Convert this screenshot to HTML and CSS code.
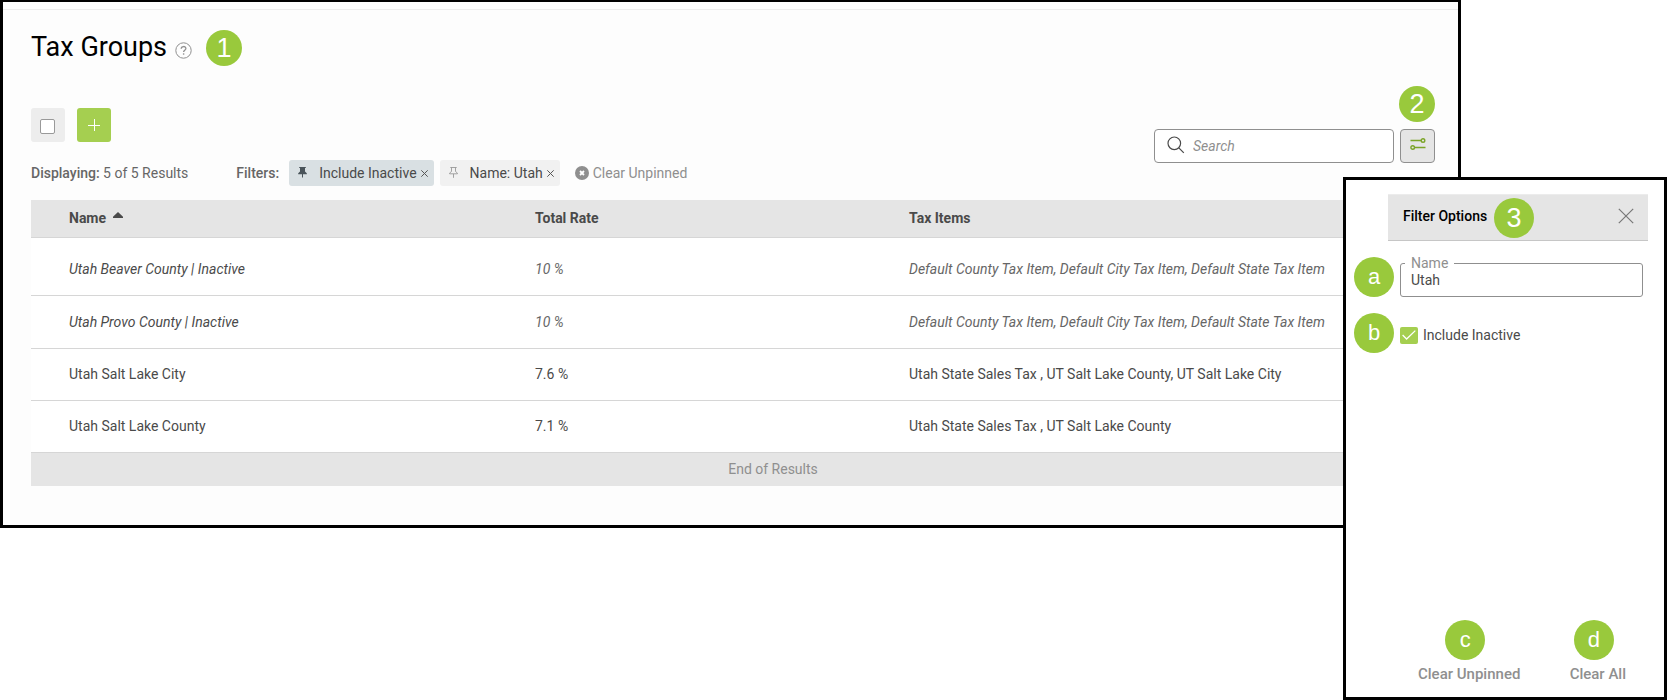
FILE: index.html
```html
<!DOCTYPE html>
<html lang="en">
<head>
  <meta charset="UTF-8" />
  <meta name="viewport" content="width=device-width, initial-scale=1.0"/>
  <title>Tax Groups</title>
  <link rel="stylesheet" href="styles.css">
</head>
<body>
  <main class="frame">
    <header class="page-header">
      <h1>Tax Groups</h1>
      <button class="help" aria-label="Help">
        <svg width="17" height="17" viewBox="0 0 17 17" fill="none" stroke="#8f8f8f">
          <circle cx="8.5" cy="8.5" r="7.7" />
          <path d="M6.2 6.8c0-3 4.7-3 4.7-.2 0 1.6-2.3 1.7-2.3 3.4" stroke-width="1.3" />
          <path d="M8.6 11.3v1.4" stroke-width="1.4" />
        </svg>
      </button>
      <span class="badge">1</span>
    </header>

    <div class="toolbar">
      <div class="actions">
        <label class="tile"><input type="checkbox" class="check" aria-label="Select all"></label>
        <button class="add" aria-label="Add">
          <svg width="12" height="12" viewBox="0 0 12 12" stroke="#fff" stroke-width="1"><path d="M0 6.5h12M6.5 0v12" /></svg>
        </button>
      </div>
      <div class="search-group">
        <label class="search">
          <svg width="18" height="18" viewBox="0 0 18 18" fill="none" stroke="#4a4a4a" stroke-width="1.2">
            <circle cx="7.3" cy="7.3" r="6.3" />
            <path d="M11.8 11.8l5 5" />
          </svg>
          <input type="text" placeholder="Search" aria-label="Search">
        </label>
        <button class="filter-btn" aria-label="Filter options">
          <svg width="16" height="12" viewBox="0 0 16 12" fill="none" stroke="#7ba428" stroke-width="1.4">
            <path d="M.5 2.5h10.5M5 9.5h10.5" />
            <circle cx="13" cy="2.5" r="1.8" />
            <circle cx="2.7" cy="9.5" r="1.8" />
          </svg>
        </button>
        <span class="badge badge-over">2</span>
      </div>
    </div>

    <div class="filters">
      <p class="displaying"><b>Displaying:</b> 5 of 5 Results</p>
      <b>Filters:</b>
      <div class="chips">
        <span class="chip pinned">
          <svg width="9" height="11" viewBox="0 0 9 11" fill="#4a545a"><path d="M1.2 0h6.6v1H7v3.5l1.8 1.7v1H5V10l-.5 1-.5-1V7.2H.2v-1L2 4.5V1h-.8z" /></svg>
          <span>Include Inactive</span>
          <button class="remove" aria-label="Remove Include Inactive">
            <svg width="7" height="7" viewBox="0 0 7 7" stroke="#555"><path d="M.3.3l6.4 6.4M6.7.3L.3 6.7" /></svg>
          </button>
        </span>
        <span class="chip">
          <svg width="9" height="11" viewBox="0 0 9 11" fill="none" stroke="#999" stroke-width=".9"><path d="M1.3.5h6.4M2.5.5v4L.6 6v.8h7.8V6L6.5 4.5v-4M4.5 7v3.8" /></svg>
          <span>Name: Utah</span>
          <button class="remove" aria-label="Remove Name: Utah">
            <svg width="7" height="7" viewBox="0 0 7 7" stroke="#555"><path d="M.3.3l6.4 6.4M6.7.3L.3 6.7" /></svg>
          </button>
        </span>
      </div>
      <button class="clear-chips">
        <svg width="14" height="14" viewBox="0 0 14 14"><circle cx="7" cy="7" r="7" fill="#8f8f8f" /><path d="M5 5l4 4M9 5L5 9" stroke="#fff" stroke-width="1.8" /></svg>
        Clear Unpinned
      </button>
    </div>

    <table class="groups">
      <thead>
        <tr>
          <th class="col-name">Name <svg class="sort" width="10" height="6" viewBox="0 0 10 6" fill="#4a4a4a"><path d="M0 6V4.8L5 0l5 4.8V6z" /></svg></th>
          <th class="col-rate">Total Rate</th>
          <th>Tax Items</th>
        </tr>
      </thead>
      <tbody>
        <tr class="inactive"><td>Utah Beaver County | Inactive</td><td>10 %</td><td>Default County Tax Item, Default City Tax Item, Default State Tax Item</td></tr>
        <tr class="inactive"><td>Utah Provo County | Inactive</td><td>10 %</td><td>Default County Tax Item, Default City Tax Item, Default State Tax Item</td></tr>
        <tr><td>Utah Salt Lake City</td><td>7.6 %</td><td>Utah State Sales Tax , UT Salt Lake County, UT Salt Lake City</td></tr>
        <tr><td>Utah Salt Lake County</td><td>7.1 %</td><td>Utah State Sales Tax , UT Salt Lake County</td></tr>
      </tbody>
      <tfoot>
        <tr><td colspan="3">End of Results</td></tr>
      </tfoot>
    </table>
  </main>

  <aside class="panel">
    <header class="panel-header">
      <h2>Filter Options</h2>
      <span class="badge badge-lg">3</span>
      <button class="close" aria-label="Close">
        <svg width="16" height="16" viewBox="0 0 16 16" stroke="#777" stroke-width="1.2"><path d="M.8.8l14.4 14.4M15.2.8L.8 15.2" /></svg>
      </button>
    </header>
    <div class="option">
      <span class="badge badge-lg letter">a</span>
      <fieldset class="field">
        <legend><label for="name">Name</label></legend>
        <input type="text" id="name" value="Utah">
      </fieldset>
    </div>
    <div class="option">
      <span class="badge badge-lg letter">b</span>
      <label class="toggle">
        <input type="checkbox" class="check-on" checked>
        <svg class="tick" width="14" height="10" viewBox="0 0 14 10" fill="none" stroke="#fff" stroke-width="1.3"><path d="M.6 5l4 4L13.3.6" /></svg>
        Include Inactive
      </label>
    </div>
    <footer class="panel-footer">
      <div class="clear">
        <span class="badge badge-lg letter">c</span>
        <button>Clear Unpinned</button>
      </div>
      <div class="clear">
        <span class="badge badge-lg letter">d</span>
        <button>Clear All</button>
      </div>
    </footer>
  </aside>
</body>
</html>
```
FILE: styles.css
```css
* {
  box-sizing: border-box;
}

body {
  margin: 0;
  min-height: 100vh;
  position: relative;
  background: #fff;
  color: #4a4a4a;
  font-family: Roboto, "Liberation Sans", sans-serif;
  font-size: 14px;
  line-height: 20px;
}

h1, h2, p {
  margin: 0;
}

b {
  font-weight: 500;
}

button {
  padding: 0;
  border: none;
  background: none;
  color: inherit;
  font: inherit;
  cursor: pointer;
}

input {
  margin: 0;
  border: none;
  background: none;
  color: inherit;
  font: inherit;
  outline: none;
}

svg {
  display: block;
  flex: none;
}

.frame {
  margin-right: 206px;
  padding: 0 23px 39px 28px;
  border: 3px solid #000;
  border-top-width: 2px;
  background: #fdfdfd;
}

.page-header {
  display: flex;
  align-items: center;
  margin: 0 -23px 0 -28px;
  padding: 20px 28px 0;
  background: linear-gradient(#ececec, #ececec) 0 7px / 100% 1px no-repeat;
}

.page-header h1 {
  padding-bottom: 2px;
  color: #000;
  font-size: 27px;
  font-weight: 400;
  line-height: 50px;
}

.help {
  margin: 4px 14px 0 8px;
}

.badge {
  display: flex;
  flex: none;
  align-items: center;
  justify-content: center;
  width: 36px;
  height: 36px;
  border-radius: 50%;
  background: #99c93c;
  color: #fff;
  font-family: "Liberation Sans", sans-serif;
  font-size: 27px;
  font-weight: 400;
}

.badge-lg {
  width: 40px;
  height: 40px;
}

.letter {
  font-size: 22px;
}

.toolbar {
  display: flex;
  justify-content: space-between;
  margin-top: 34px;
}

.actions {
  display: flex;
  gap: 12px;
}

.tile, .add {
  display: flex;
  align-items: center;
  justify-content: center;
  width: 34px;
  height: 34px;
  border-radius: 3px;
}

.tile {
  padding: 3px 2px 0 0;
  background: #ededed;
}

.add {
  background: #a5cf50;
}

.check {
  appearance: none;
  width: 15px;
  height: 15px;
  border: 1px solid #999;
  border-radius: 2px;
  background: #fff;
}

.search-group {
  display: flex;
  gap: 6px;
  position: relative;
  margin-top: 21px;
}

.search {
  display: flex;
  align-items: center;
  gap: 6px;
  width: 240px;
  height: 34px;
  padding: 0 12px;
  border: 1px solid #8f8f8f;
  border-radius: 4px;
  background: #fff;
}

.search svg {
  margin-bottom: 2px;
}

.search input {
  flex: 1;
  min-width: 0;
}

.search input::placeholder {
  color: #8f8f8f;
  font-style: italic;
  opacity: 1;
}

.filter-btn {
  display: flex;
  align-items: center;
  justify-content: center;
  width: 35px;
  height: 34px;
  padding-bottom: 4px;
  border: 1px solid #8f8f8f;
  border-radius: 4px;
  background: #e5e5e5;
}

.badge-over {
  position: absolute;
  right: 0;
  bottom: 41px;
}

.filters {
  display: flex;
  align-items: center;
  margin-top: -3px;
  color: #666;
}

.displaying {
  margin-right: 48px;
}

.chips {
  display: flex;
  gap: 6px;
  margin: 0 15px 0 10px;
}

.chip {
  display: flex;
  align-items: center;
  height: 26px;
  padding: 0 6px 0 9px;
  border-radius: 3px;
  background: #f1f1f1;
  color: #4a4a4a;
}

.chip > svg {
  margin: 0 12px 2px 0;
}

.chip.pinned {
  background: #d9e0e3;
}

.remove {
  margin-left: 4px;
}

.clear-chips {
  display: flex;
  align-items: center;
  gap: 4px;
  color: #8f8f8f;
}

.groups {
  width: 100%;
  margin-top: 14px;
  border-collapse: collapse;
  background: #fff;
}

.groups th, .groups td {
  padding: 0 0 0 38px;
  border-bottom: 1px solid #d6d6d6;
  text-align: left;
}

.groups th {
  height: 37px;
  background: #e5e5e5;
  font-weight: 700;
}

.groups td {
  height: 52px;
}

.groups .inactive td {
  height: 53px;
  color: #666;
  font-style: italic;
}

.groups .inactive td:first-child {
  color: #4a4a4a;
}

.groups tbody tr:first-child td {
  height: 58px;
  padding-top: 5px;
}

.groups tfoot td {
  height: 34px;
  padding-left: 80px;
  border-bottom: none;
  background: #e5e5e5;
  color: #8f8f8f;
  text-align: center;
}

.col-name {
  width: 466px;
}

.col-rate {
  width: 374px;
}

.sort {
  display: inline-block;
  margin-left: 3px;
  vertical-align: 5px;
}

/* filter drawer over the list */
.panel {
  display: flex;
  flex-direction: column;
  position: absolute;
  top: 177px;
  right: 0;
  bottom: 0;
  width: 324px;
  padding: 14px 16px 13px 8px;
  border: 3px solid #000;
  background: #fff;
}

.panel-header {
  display: flex;
  align-items: center;
  height: 47px;
  margin-left: 34px;
  padding: 0 14px 0 15px;
  border-top: 1px solid #ececec;
  border-bottom: 1px solid #c6c6c6;
  background: #e5e5e5;
}

.panel-header h2 {
  margin: 0 7px 4px 0;
  color: #000;
  font-size: 14px;
  font-weight: 500;
}

.close {
  margin: 0 0 4px auto;
}

.option {
  display: flex;
  align-items: flex-end;
  gap: 6px;
  margin-top: 12px;
  padding: 0 5px 4px 0;
}

.field {
  flex: 1;
  min-width: 0;
  height: 44px;
  margin: 0;
  padding: 0 8px;
  border: 1px solid #8f8f8f;
  border-radius: 3px;
}

.field legend {
  margin-left: -4px;
  padding: 0 6px;
  color: #8f8f8f;
}

.field input {
  display: block;
  width: 100%;
  height: 14px;
  padding: 0 2px;
}

.toggle {
  display: flex;
  align-items: center;
  align-self: center;
  gap: 5px;
  position: relative;
  padding-top: 4px;
}

.check-on {
  appearance: none;
  width: 18px;
  height: 17px;
  border-radius: 2px;
  background: #a5cf50;
}

.tick {
  position: absolute;
  left: 2px;
  top: 9px;
}

.panel-footer {
  display: flex;
  justify-content: space-between;
  margin-top: auto;
  padding: 0 22px 0 64px;
}

.clear {
  display: flex;
  flex-direction: column;
  align-items: center;
  gap: 4px;
  color: #8f8f8f;
  font-size: 15px;
  font-weight: 500;
}

.clear .badge {
  margin-right: 8px;
}
```
